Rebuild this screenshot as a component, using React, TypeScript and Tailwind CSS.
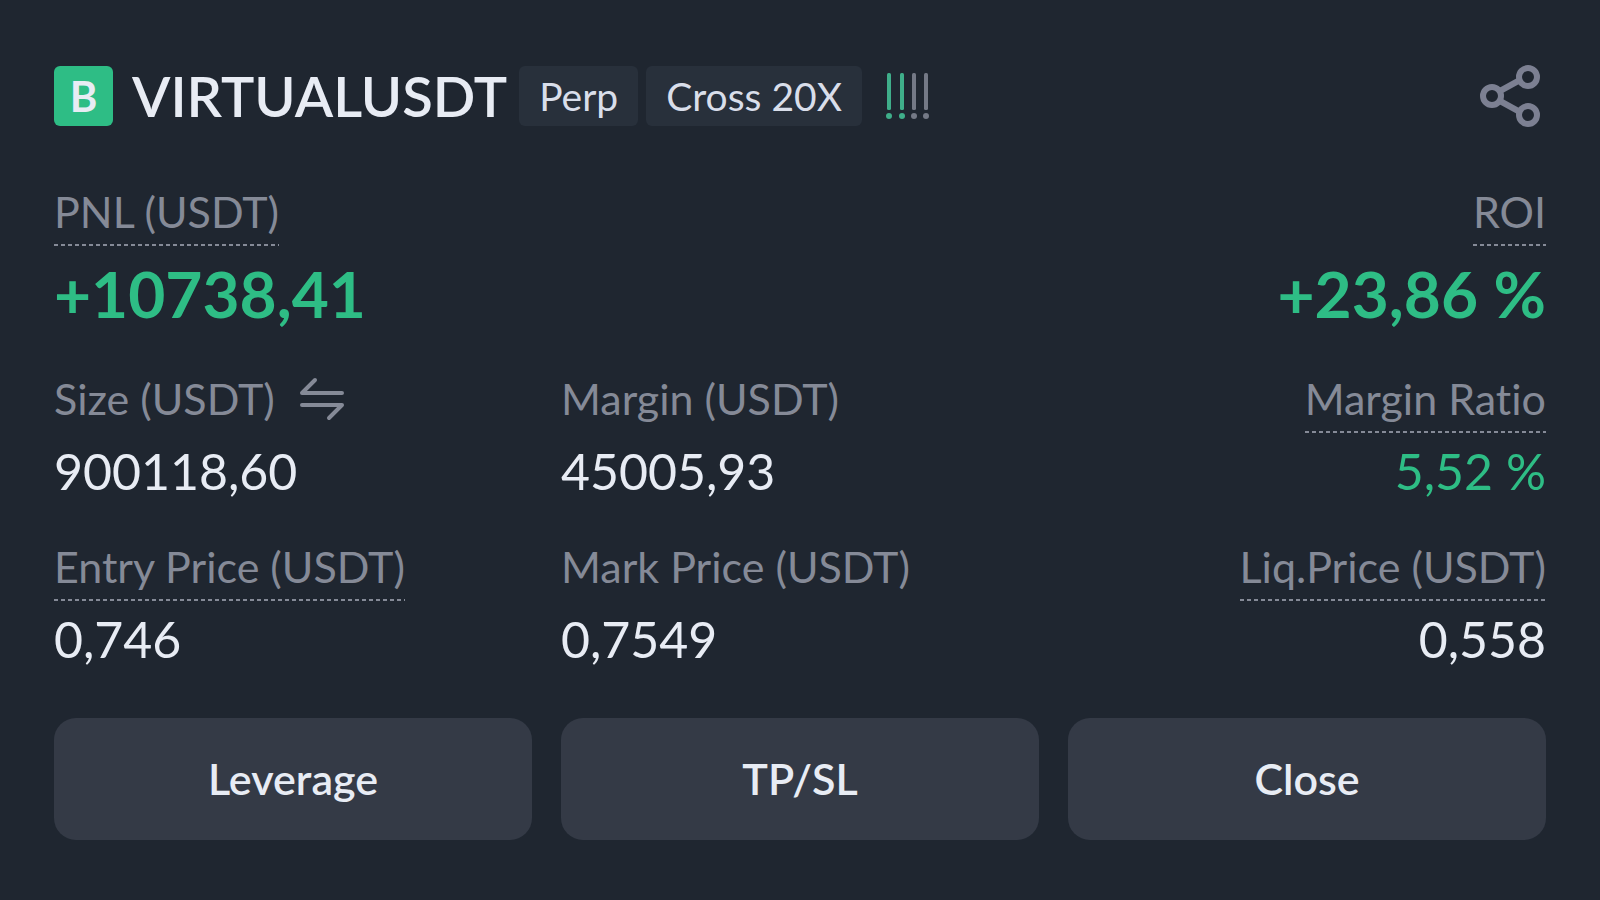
interface StatProps {
  label: string
  value: string
  align?: 'left' | 'right'
  size?: 'large' | 'normal'
  tone?: 'default' | 'positive'
  underlined?: boolean
  onSwap?: () => void
}

interface Tag {
  id: string
  text: string
}

const tags: Tag[] = [
  { id: 'type', text: 'Perp' },
  { id: 'mode', text: 'Cross 20X' }
]

const actions = ['Leverage', 'TP/SL', 'Close']

function SwapIcon() {
  return (
    <svg className="w-[46px] h-[44px]" viewBox="0 0 46 44" fill="none" stroke="currentColor" strokeWidth="4" strokeLinecap="round" strokeLinejoin="round" aria-hidden="true">
      <path d="M43 16H3L16 3" />
      <path d="M3 28H43L30 41" />
    </svg>
  )
}

function ShareIcon() {
  return (
    <svg className="w-[62px] h-[64px]" viewBox="0 0 62 64" fill="none" stroke="currentColor" strokeWidth="6" aria-hidden="true">
      <circle cx="12" cy="32" r="9" />
      <circle cx="48" cy="13" r="9" />
      <circle cx="48" cy="51" r="9" />
      <path d="M20 27L40 16M20 37L40 48" />
    </svg>
  )
}

// Risk meter: two of four marks lit
function RiskIcon() {
  const marks = [
    { x: 3, color: '#3fae8a' },
    { x: 16, color: '#3fae8a' },
    { x: 28, color: '#747986' },
    { x: 40, color: '#747986' }
  ]

  return (
    <svg className="w-11 h-12" viewBox="0 0 44 48" role="img" aria-label="Risk level 2 of 4">
      {marks.map(mark => (
        <g key={mark.x} fill={mark.color}>
          <rect x={mark.x - 2} y="1" width="4" height="37" rx="1.5" />
          <circle cx={mark.x} cy="44" r="3" />
        </g>
      ))}
    </svg>
  )
}

function Stat({
  label,
  value,
  align = 'left',
  size = 'normal',
  tone = 'default',
  underlined = false,
  onSwap
}: StatProps) {
  return (
    <div className={`flex flex-col gap-[10px] ${align === 'right' ? 'items-end' : 'items-start'}`}>
      <dt
        className={`flex gap-6 h-[59px] text-[43px] leading-[50px] text-[#858a97] whitespace-nowrap ${
          underlined
            ? 'bg-[repeating-linear-gradient(90deg,#858a97_0_4px,transparent_4px_7px)] bg-[length:100%_2px] bg-bottom bg-no-repeat'
            : ''
        }`}
      >
        {label}
        {onSwap && (
          <button onClick={onSwap} className="h-[50px] flex items-center" aria-label="Switch size unit">
            <SwapIcon />
          </button>
        )}
      </dt>
      <dd
        className={`whitespace-nowrap ${
          size === 'large' ? 'text-[64px] leading-[76px] font-bold' : 'text-[50px] leading-[56px]'
        } ${tone === 'positive' ? 'text-[#2ebd85]' : 'text-[#e8ecf4]'}`}
      >
        {value}
      </dd>
    </div>
  )
}

export default function App() {
  return (
    <main className="min-h-screen bg-[#1f2630] px-[54px] pt-[66px] pb-[60px] font-['Lato',sans-serif] [font-variant-ligatures:none] text-[#e8ecf4]">
      {/* Header */}
      <header className="flex items-center h-[60px]">
        <span className="w-[59px] h-[60px] flex items-center justify-center rounded-md bg-[#2ebd85] text-[42px] leading-[48px] font-bold">
          B
        </span>
        <h1 className="ml-[19px] text-[56px] leading-[60px] font-semibold">VIRTUALUSDT</h1>
        <div className="flex gap-2 ml-3">
          {tags.map(tag => (
            <span key={tag.id} className="h-[60px] px-5 rounded-md bg-[#28303b] text-[39px] leading-[60px] text-[#d9deea] whitespace-nowrap">
              {tag.text}
            </span>
          ))}
        </div>
        <div className="ml-6">
          <RiskIcon />
        </div>
        <button className="ml-auto mr-1 text-[#7c8092]" aria-label="Share">
          <ShareIcon />
        </button>
      </header>

      {/* Profit */}
      <dl className="mt-[61px] flex justify-between">
        <Stat label="PNL (USDT)" value="+10738,41" size="large" tone="positive" underlined />
        <Stat label="ROI" value="+23,86 %" size="large" tone="positive" align="right" underlined />
      </dl>

      {/* Position details */}
      <dl className="mt-[42px] grid grid-cols-3 gap-x-[29px] gap-y-[43px]">
        <Stat label="Size (USDT)" value="900118,60" onSwap={() => {}} />
        <Stat label="Margin (USDT)" value="45005,93" />
        <Stat label="Margin Ratio" value="5,52 %" tone="positive" align="right" underlined />
        <Stat label="Entry Price (USDT)" value="0,746" underlined />
        <Stat label="Mark Price (USDT)" value="0,7549" />
        <Stat label="Liq.Price (USDT)" value="0,558" align="right" underlined />
      </dl>

      {/* Actions */}
      <div className="mt-[51px] grid grid-cols-3 gap-[29px]">
        {actions.map(action => (
          <button key={action} className="h-[122px] rounded-[22px] bg-[#343a46] text-[43px] leading-[50px] font-semibold">
            {action}
          </button>
        ))}
      </div>
    </main>
  )
}
